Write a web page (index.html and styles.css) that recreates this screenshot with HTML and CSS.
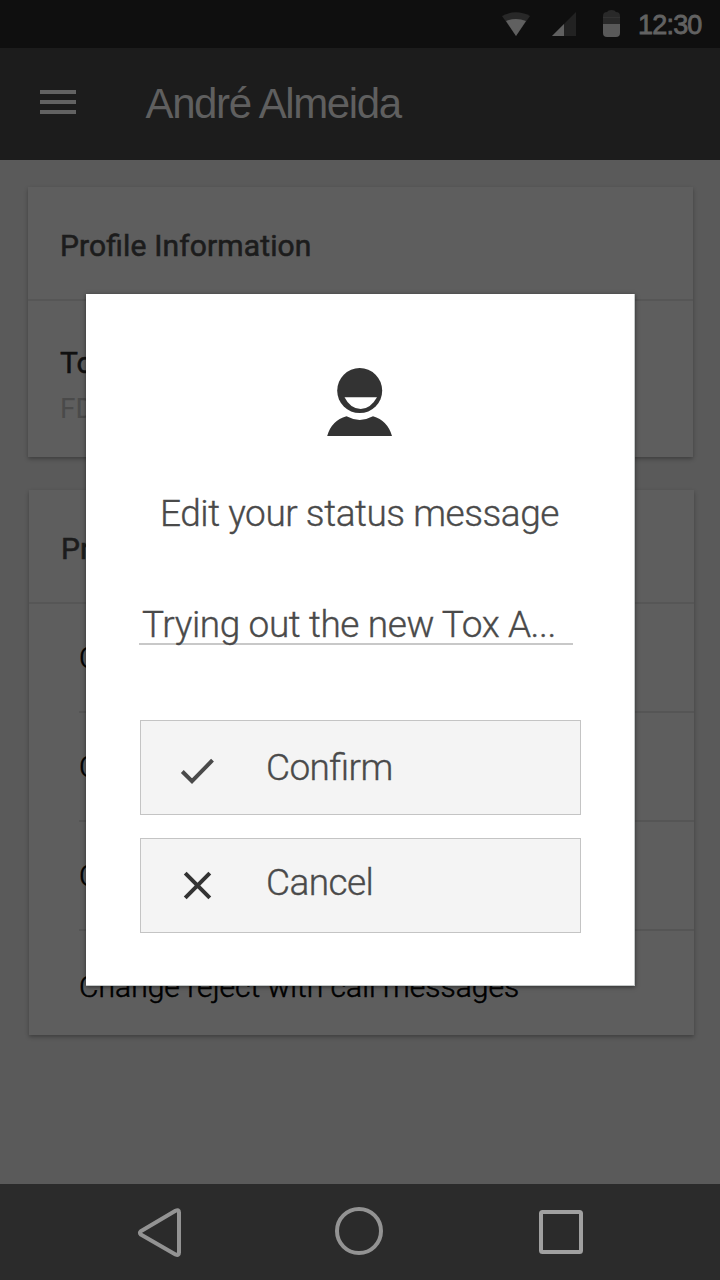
FILE: index.html
```html
<!DOCTYPE html>
<html lang="en">
<head>
<meta charset="utf-8">
<title>André Almeida</title>
<link rel="stylesheet" href="styles.css">
</head>
<body>
<div class="screen">
  <header class="status-bar">
    <svg class="status-icons" width="124" height="48" viewBox="500 0 124 48">
      <path d="M502 16Q516 8.500 530 16L516 36Z" fill="#282828"/>
      <path d="M506 21Q516 17 526 21L516 36Z" fill="#606060"/>
      <path d="M552 36L576 12V36Z" fill="#222"/>
      <path d="M552 36L564 24V36Z" fill="#606060"/>
      <path d="M603 24V16Q603 12 607 12Q608 10 611.500 10Q615 10 616 12Q620 12 620 16V24Z" fill="#292929"/>
      <path d="M603 17.500H620" stroke="#323232"/>
      <path d="M603 24H620V33Q620 37 616 37H607Q603 37 603 33Z" fill="#595959"/>
    </svg>
    <span class="clock">12:30</span>
  </header>
  <div class="app-bar">
    <div class="menu"><i></i><i></i><i></i></div>
    <h1 class="title">André Almeida</h1>
  </div>
  <main class="content">
    <section class="card profile">
      <h2 class="card-title">Profile Information</h2>
      <div class="identity">
        <div class="label">Tox ID</div>
        <div class="value">FD</div>
      </div>
    </section>
    <section class="card preferences">
      <h2 class="card-title">Preferences</h2>
      <ul class="options">
        <li>Change</li>
        <li>Change</li>
        <li>Change</li>
        <li>Change reject with call messages</li>
      </ul>
    </section>
  </main>
  <nav class="nav-bar">
    <svg width="720" height="96" viewBox="0 1184 720 96" fill="none" stroke="#939393" stroke-width="4" stroke-linejoin="round">
      <path d="M140.800 1231.200L175.500 1210.800Q179 1209 179 1212.500V1252.500Q179 1256 175.500 1254.400L140.800 1234.500Q139 1232.800 140.800 1231.200Z"/>
      <circle cx="359" cy="1231" r="22"/>
      <rect x="541" y="1212" width="40" height="40" rx="1.500" stroke="#a0a0a0"/>
    </svg>
  </nav>
  <div class="dialog" role="dialog">
    <svg class="avatar" width="66" height="70" viewBox="327 367 66 70">
      <circle cx="359.700" cy="390.600" r="22.500" fill="#333"/>
      <path d="M344.500 397.300H377Q370.500 409 360.700 409Q350.500 409 344.500 397.300Z" fill="#fff"/>
      <path d="M327.200 436Q331.500 420.500 346.500 416.300Q359.700 423.500 373 416.300Q387.500 420.500 392 436Z" fill="#333"/>
    </svg>
    <h2 class="prompt">Edit your status message</h2>
    <div class="field">Trying out the new Tox A...</div>
    <div class="actions">
      <button class="action" type="button">
        <svg width="36" height="36" viewBox="179 752 36 36" fill="none" stroke="#4a4a4a" stroke-width="4"><path d="M182.300 771.500L192 781.200L212.500 760.200"/></svg>
        <span>Confirm</span>
      </button>
      <button class="action cancel" type="button">
        <svg width="36" height="36" viewBox="179 867 36 36" fill="none" stroke="#333" stroke-width="4"><path d="M185.200 873.200L209.800 897.800M209.800 873.200L185.200 897.800"/></svg>
        <span>Cancel</span>
      </button>
    </div>
  </div>
</div>
</body>
</html>
```
FILE: styles.css
```css
* { box-sizing: border-box; }
body { margin: 0; font-family: Roboto, sans-serif; }
h1, h2, ul { margin: 0; padding: 0; font-weight: 400; }

.screen {
  position: relative;
  display: grid;
  grid-template-rows: 48px 112px 1024px 96px;
  width: 720px;
  height: 1280px;
  overflow: hidden;
  background: #5a5a5a;
}
.status-bar {
  display: flex;
  justify-content: flex-end;
  padding-right: 18px;
  background: #0f0f0f;
}
.status-icons { margin-right: 14px; }
.clock {
  width: 64px;
  margin-right: 1px;
  font: 500 27px/50px "Liberation Sans", Arial, sans-serif;
  letter-spacing: -0.8px;
  color: #626262;
  -webkit-text-stroke: 0.8px #626262;
  white-space: nowrap;
}
.app-bar {
  display: flex;
  align-items: center;
  padding-left: 40px;
  background: #1c1c1c;
}
.menu { display: grid; gap: 6px; width: 36px; margin: 0 69.5px 4px 0; }
.menu i { height: 4px; background: #626262; }
.title {
  font: 400 42px/50px "Liberation Sans", Arial, sans-serif;
  letter-spacing: -1.38px;
  color: #5f5f5f;
}

.content { padding: 27px 27px 0 28px; }
.card {
  width: 665px;
  background: #5e5e5e;
  box-shadow: 0 2px 4px rgba(0, 0, 0, 0.3);
}
.profile { height: 270px; }
.preferences { height: 545px; margin: 33px 0 0 1px; }
.card-title {
  height: 114px;
  padding-left: 32px;
  border-bottom: 2px solid #565656;
  font-size: 30px;
  line-height: 118px;
  letter-spacing: 0.14px;
  font-feature-settings: "liga" 1;
  color: #1c1c1c;
  -webkit-text-stroke: 0.6px #1c1c1c;
}
.identity { padding: 44px 32px 0; }
.label { font-size: 30px; line-height: 36px; color: #101010; -webkit-text-stroke: 0.5px #101010; }
.value { margin-top: 11px; font-size: 28px; line-height: 34px; color: #4a4a4a; }
.options { padding-left: 50px; list-style: none; }
.options li {
  height: 109px;
  border-bottom: 2px solid #555;
  font-size: 30px;
  font-weight: 300;
  line-height: 108px;
  letter-spacing: 0.03px;
  color: #000;
  -webkit-text-stroke: 0.5px #000;
}
.options li:last-child { height: 104px; border: 0; line-height: 112px; }

.nav-bar { background: #2b2b2b; }
.nav-bar svg { display: block; }

.dialog {
  position: absolute;
  left: 86px;
  top: 294px;
  width: 549px;
  height: 692px;
  display: flex;
  flex-direction: column;
  padding: 73px 53px 0;
  background: #fff;
  border: solid #c4c8c8;
  border-width: 0 1px 1px 0;
  box-shadow: 0 1px 4px rgba(0, 0, 0, 0.5);
  color: #4a4a4a;
  font-weight: 300;
  -webkit-text-stroke: 0.35px #4a4a4a;
}
.avatar { margin-left: 188px; }
.prompt {
  margin-top: 52px;
  padding-left: 21px;
  font-size: 37px;
  font-weight: 300;
  line-height: 50px;
  letter-spacing: -0.45px;
  white-space: nowrap;
}
.field {
  width: 434px;
  height: 45px;
  margin-top: 61px;
  padding-left: 3px;
  border-bottom: 2px solid #c8c8c8;
  font-size: 37px;
  line-height: 50px;
  letter-spacing: -0.4px;
  white-space: nowrap;
}
.actions { display: grid; gap: 23px; margin: 75px 0 0 1px; }
.action {
  display: flex;
  align-items: center;
  width: 441px;
  height: 95px;
  padding: 0 0 0 38px;
  border: 1px solid #c4c4c4;
  background: #f4f4f4;
  color: #4a4a4a;
  font: 300 37px/50px Roboto, sans-serif;
  letter-spacing: -0.6px;
  font-feature-settings: "liga" 1;
}
.action svg { margin-top: 5px; }
.action span { margin-left: 51px; }
.cancel { padding-bottom: 6px; }
.cancel svg { margin-top: 4px; }
```
